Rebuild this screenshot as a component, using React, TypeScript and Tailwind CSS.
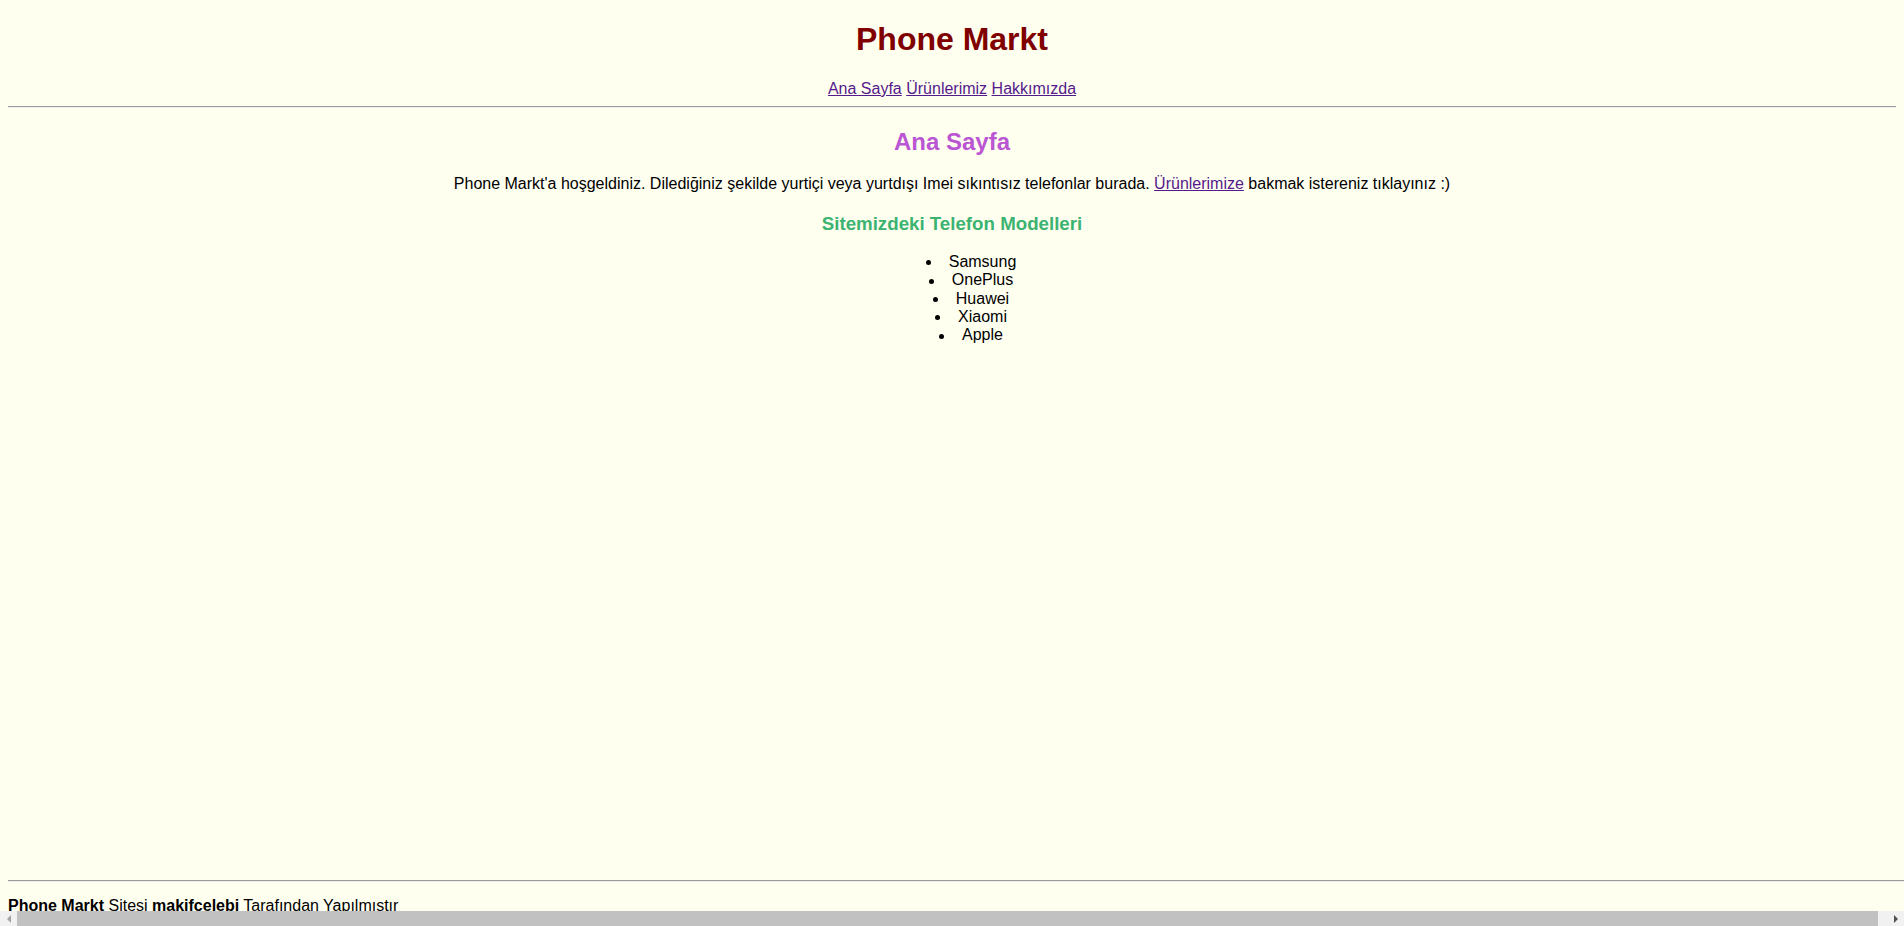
import React from "react";

const Hr = ({ className = "" }: { className?: string }) => (
  <div className={`h-0 border-t border-b border-t-[#9a9a9a] border-b-[#eeeeee] ${className}`} />
);

const items = ["Samsung", "OnePlus", "Huawei", "Xiaomi", "Apple"];

export default function App() {
  return (
    <div className="h-[926px] w-full flex flex-col overflow-hidden bg-[#fffff0] text-black text-[16px] leading-[18.4px] font-['Liberation_Sans',Arial,sans-serif]">
      <main className="flex-1 px-2 flex flex-col">
        <h1 className="mt-[21.44px] text-center text-[32px] leading-[36.8px] font-bold text-[#800000]">
          Phone Markt
        </h1>
        <nav className="mt-[21.44px] text-center leading-[18.4px] text-[#551a8b]">
          <a href="#" className="underline">Ana Sayfa</a>{" "}
          <a href="#" className="underline">Ürünlerimiz</a>{" "}
          <a href="#" className="underline">Hakkımızda</a>
        </nav>
        <Hr className="mt-[8px]" />
        <h2 className="mt-[19.92px] text-center text-[24px] leading-[27.6px] font-bold text-[#ba55d3]">
          Ana Sayfa
        </h2>
        <p className="mt-[19.92px] text-center leading-[18.4px]">
          Phone Markt'a hoşgeldiniz. Dilediğiniz şekilde yurtiçi veya yurtdışı Imei sıkıntısız telefonlar burada.{" "}
          <a href="#" className="underline text-[#551a8b]">Ürünlerimize</a> bakmak istereniz tıklayınız :)
        </p>
        <h3 className="mt-[18.72px] text-center text-[18.72px] leading-[21.5px] font-bold text-[#3cb371]">
          Sitemizdeki Telefon Modelleri
        </h3>
        <ul className="mt-[18.72px] pl-[40px] text-center">
          {items.map((it) => (
            <li key={it} className="leading-[18.4px]">
              <span className="inline-block w-[21px] align-middle">
                <span className="block ml-[-2px] w-[5px] h-[5px] rounded-full bg-black" />
              </span>
              {it}
            </li>
          ))}
        </ul>
      </main>
      <footer className="pl-2">
        <Hr className="w-[1904px]" />
        <div className="mt-[15px] h-[14px] overflow-hidden leading-[18.4px] whitespace-nowrap">
          <b>Phone Markt</b> Sitesi <b>makifcelebi</b> Tarafından Yapılmıştır
        </div>
      </footer>
      <div className="h-[15px] flex bg-[#f1f1f1] shrink-0">
        <div className="w-[17px] flex items-center justify-center">
          <svg width="4" height="8" viewBox="0 0 4 8">
            <polygon points="4,0 0,4 4,8" fill="#a3a3a3" />
          </svg>
        </div>
        <div className="w-[1861px] bg-[#c1c1c1]" />
        <div className="flex-1" />
        <div className="w-[17px] flex items-center justify-center">
          <svg width="4" height="8" viewBox="0 0 4 8">
            <polygon points="0,0 4,4 0,8" fill="#505050" />
          </svg>
        </div>
      </div>
    </div>
  );
}
